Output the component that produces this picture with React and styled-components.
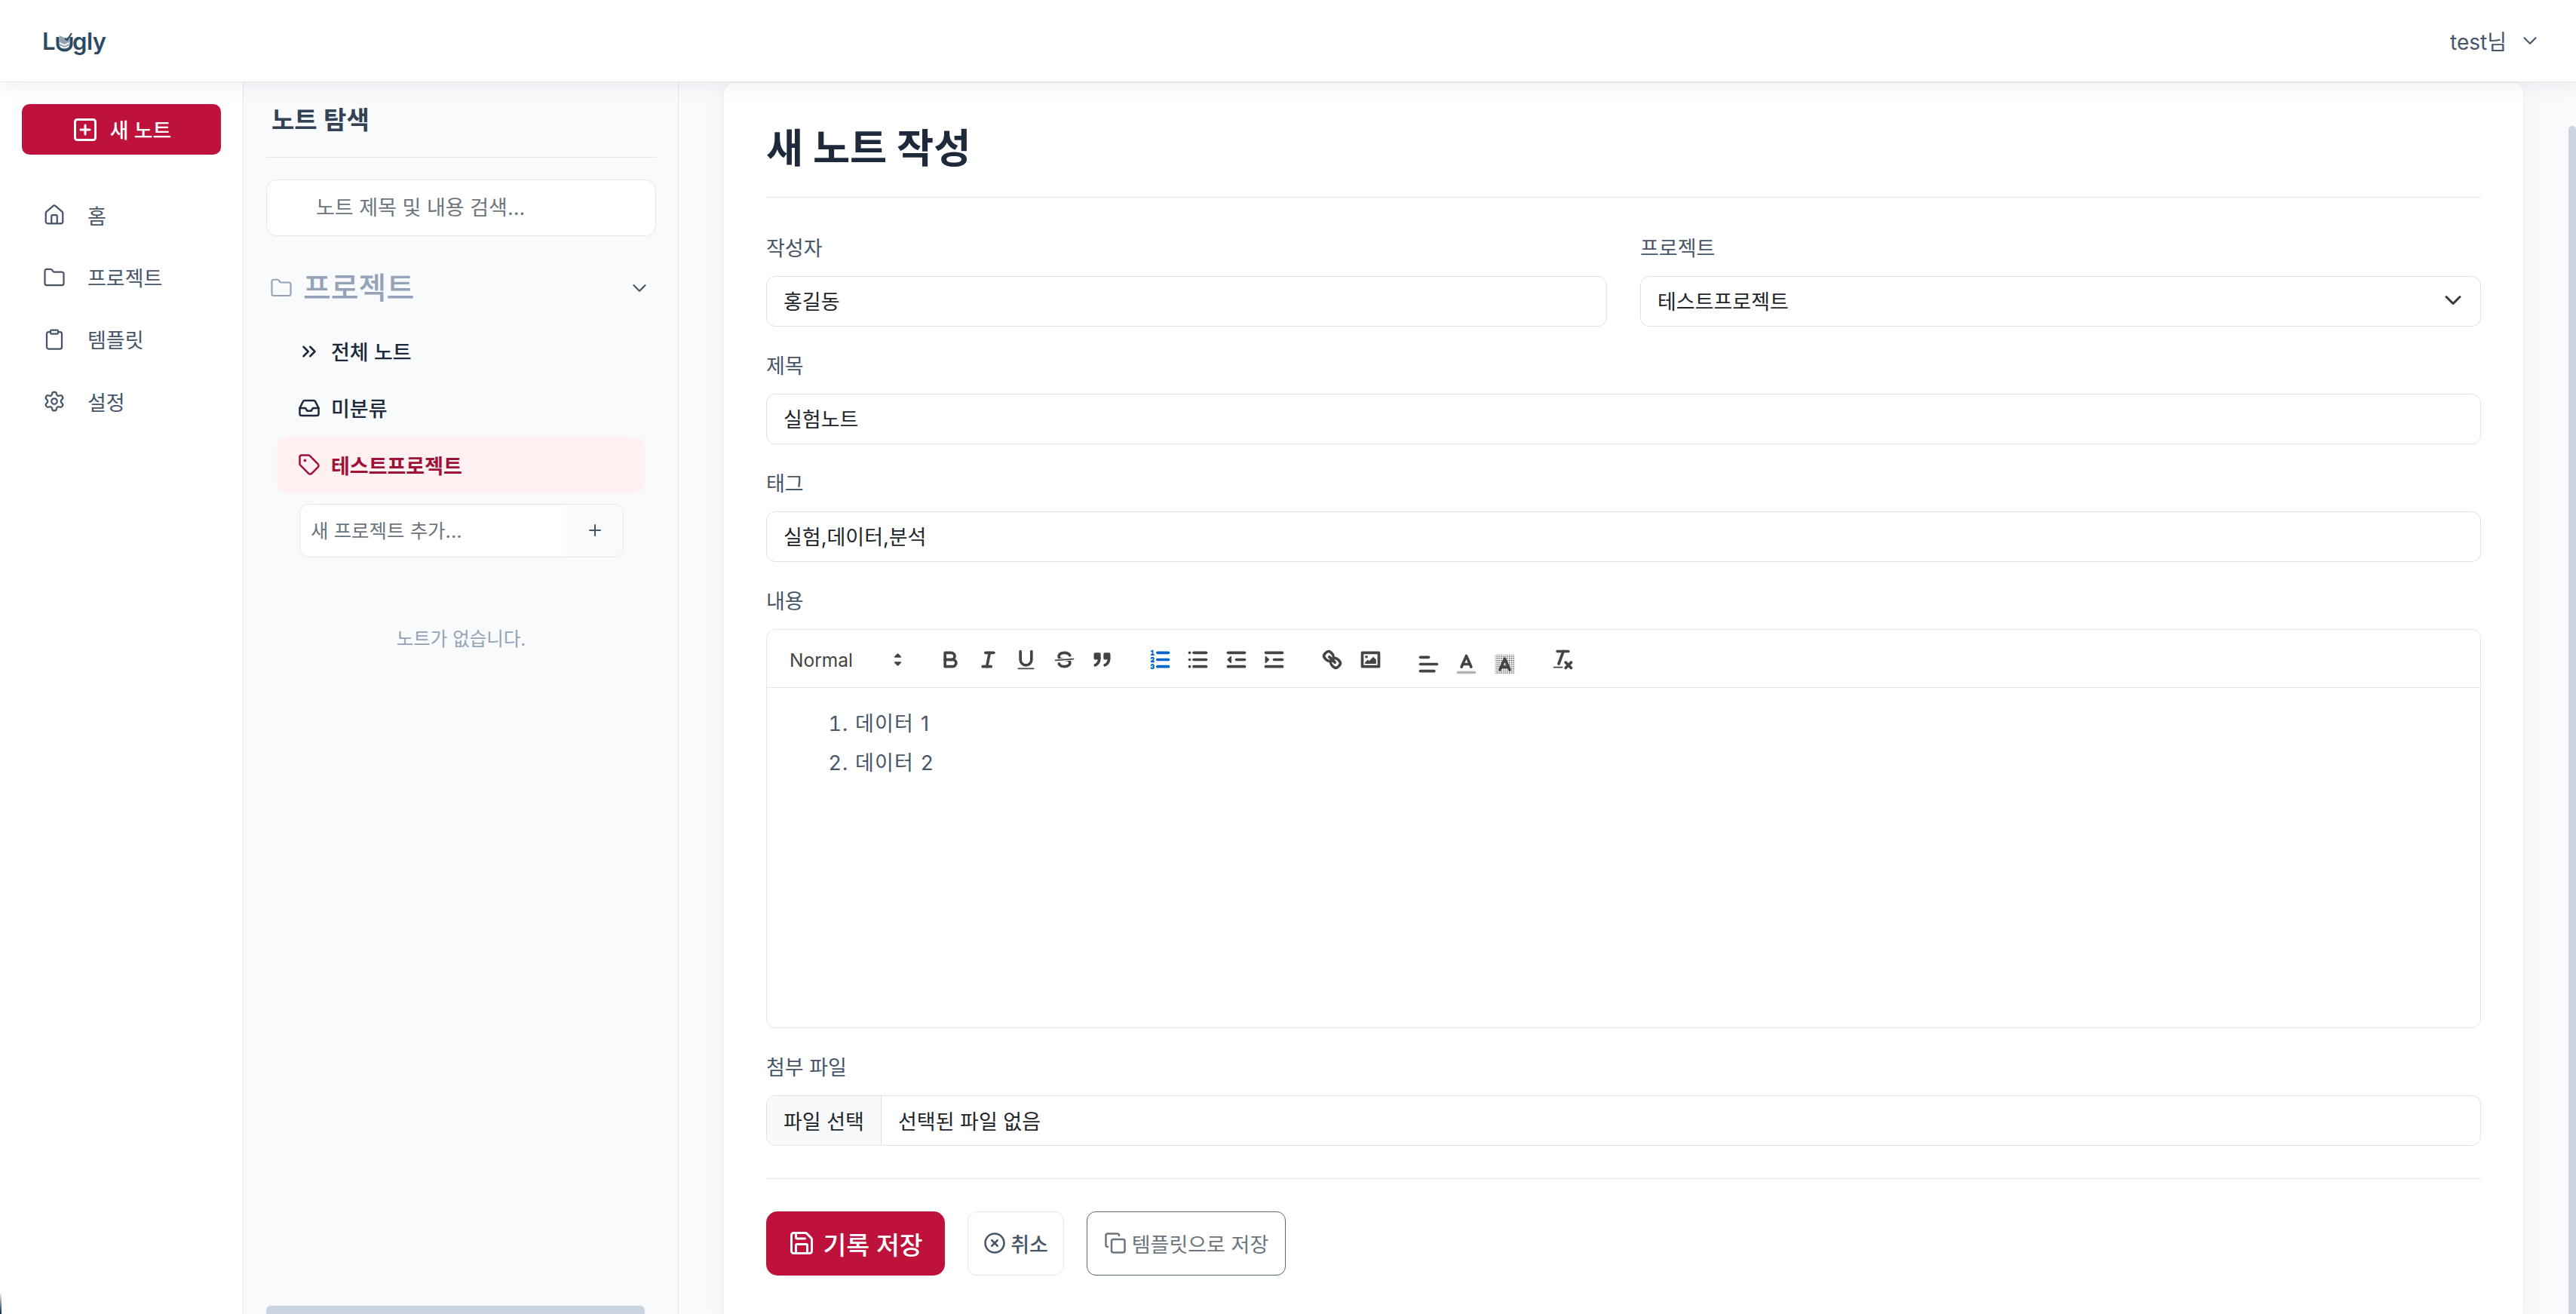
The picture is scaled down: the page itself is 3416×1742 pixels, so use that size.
import React from 'react'
import styled, { createGlobalStyle } from 'styled-components'
import {
  House, Folder, Clipboard, Settings, ChevronDown, ChevronsRight, Inbox, Tag, Plus, SquarePlus, Save, CircleX, Copy
} from 'lucide-react'

const FONT = `Inter, "Noto Sans CJK KR", "Noto Sans", sans-serif`
const BRAND = '#be123c'
const LINE = '#e2e8f0'

const GlobalStyle = createGlobalStyle`
  html, body, #root { margin: 0; height: 100%; }
  body {
    font-family: ${FONT};
    font-size: 27px;
    background: #f8fafc;
    overflow: hidden;
  }
  * { box-sizing: border-box; }
`

const Page = styled.div`
  position: relative;
  display: flex;
  flex-direction: column;
  height: 100vh;
  overflow: hidden;
`

const Header = styled.header`
  position: relative;
  z-index: 5;
  flex: 0 0 109px;
  display: flex;
  align-items: center;
  justify-content: space-between;
  padding: 0 46px 0 56px;
  background: #fff;
  border-bottom: 1px solid ${LINE};
  box-shadow: 0 4px 24px rgba(15, 23, 42, 0.07);
`

const Logo = styled.div`
  display: flex;
  align-items: center;
  font-size: 31px;
  font-weight: 600;
  color: #2c4a63;
  letter-spacing: -0.5px;
  svg { margin: 2px -1px 0 1px; }
`

const User = styled.div`
  display: flex;
  align-items: center;
  gap: 16px;
  color: #475569;
  font-size: 28px;
`

const Body = styled.div`
  flex: 1;
  display: flex;
  min-height: 0;
`

const Sidebar = styled.aside`
  flex: 0 0 323px;
  padding: 29px 29px 0;
  background: #fff;
  border-right: 1px solid ${LINE};
`

const NewNote = styled.button`
  display: flex;
  align-items: center;
  justify-content: center;
  gap: 15px;
  width: 100%;
  height: 67px;
  border: 0;
  border-radius: 10px;
  background: ${BRAND};
  color: #fff;
  font-family: ${FONT};
  font-size: 27px;
  font-weight: 500;
`

const Nav = styled.nav`
  margin-top: 39px;
`

const NavItem = styled.a`
  display: flex;
  align-items: center;
  gap: 29px;
  height: 82.4px;
  padding-left: 28px;
  color: #475569;
`

const Explorer = styled.section`
  position: relative;
  flex: 0 0 577px;
  min-width: 0;
  padding: 0 29px 0 30px;
  background: #f8fafc;
  border-right: 1px solid ${LINE};
`

const ExplorerTitle = styled.h2`
  margin: 0;
  height: 100px;
  padding: 29px 0 0 7px;
  border-bottom: 1px solid ${LINE};
  color: #334155;
  font-size: 33px;
  line-height: 42px;
  font-weight: 600;
`

const Search = styled.input`
  display: block;
  width: 100%;
  height: 75px;
  margin-top: 29px;
  padding: 0 20px 0 65px;
  border: 1px solid ${LINE};
  border-radius: 14px;
  background: #fff;
  font-family: ${FONT};
  font-size: 27px;
  &::placeholder { color: #6c757d; opacity: 1; }
`

const SectionHead = styled.div`
  display: flex;
  align-items: center;
  height: 48px;
  margin-top: 45px;
  padding: 0 7px 0 4.5px;
  color: #94a3b8;
  font-size: 40px;
  line-height: 46px;
  font-weight: 500;
  span { margin-left: 14.5px; flex: 1; }
  svg:last-child { color: #475569; }
`

const ProjectList = styled.ul`
  list-style: none;
  margin: 22px 15px 0 14px;
  padding: 0;
`

const ProjectItem = styled.li`
  display: flex;
  align-items: center;
  gap: 14px;
  height: 75.3px;
  padding-left: 28px;
  border-radius: 14px;
  background: ${({ $active }) => ($active ? '#fff1f2' : 'transparent')};
  color: ${({ $active }) => ($active ? '#9f1239' : '#1e293b')};
  font-weight: ${({ $active }) => ($active ? 700 : 500)};
`

const AddProject = styled.div`
  display: flex;
  height: 71px;
  margin: 14px 43px 0 44px;
  border: 1px solid ${LINE};
  border-radius: 12px;
  overflow: hidden;
  background: #fff;
`

const AddInput = styled.input`
  flex: 1;
  min-width: 0;
  padding: 0 14px;
  border: 0;
  background: transparent;
  font-family: ${FONT};
  font-size: 25.5px;
  &::placeholder { color: #6c757d; opacity: 1; }
`

const AddButton = styled.button`
  flex: 0 0 75px;
  display: flex;
  align-items: center;
  justify-content: center;
  border: 0;
  background: #f8fafc;
  color: #475569;
`

const Empty = styled.p`
  margin: 90px 0 0;
  color: #94a3b8;
  font-size: 24.5px;
  line-height: 36px;
  text-align: center;
`

const ScrollThumb = styled.div`
  position: absolute;
  bottom: 0;
  background: #cbd5e1;
  border-radius: 6px 6px 0 0;
`

const HorizontalThumb = styled(ScrollThumb)`
  left: 30px;
  width: 502px;
  height: 11px;
`

const VerticalThumb = styled(ScrollThumb)`
  top: 58px;
  right: 0;
  width: 10px;
`

const Main = styled.main`
  position: relative;
  flex: 1;
  min-width: 0;
  padding-left: 59px;
  background: #f8fafc;
  overflow: hidden;
`

const Card = styled.div`
  width: 2388px;
  min-height: 100%;
  padding: 0 56px;
  background: #fff;
  border: 1px solid #eef1f5;
  border-bottom: 0;
  border-radius: 14px 14px 0 0;
  box-shadow: 0 4px 30px rgba(15, 23, 42, 0.05);
`

const Title = styled.h1`
  margin: 0;
  padding: 51px 0 28px;
  border-bottom: 1px solid ${LINE};
  color: #1e293b;
  font-size: 53.5px;
  line-height: 72px;
  font-weight: 700;
`

const Form = styled.div`
  display: flex;
  flex-direction: column;
  gap: 33.5px;
  margin-top: 48px;
`

const FieldRow = styled.div`
  display: grid;
  grid-template-columns: 1fr 1fr;
  gap: 44px;
`

const Field = styled.div`
  display: flex;
  flex-direction: column;
`

const Label = styled.label`
  margin-bottom: 15.5px;
  color: #475569;
  line-height: 40px;
`

const Input = styled.input`
  height: 67px;
  padding: 0 22px 2px;
  border: 1px solid #dee2e6;
  border-radius: 12px;
  background: #fff;
  color: #212529;
  font-family: ${FONT};
  font-size: 27px;
`

const Select = styled.div`
  display: flex;
  align-items: center;
  justify-content: space-between;
  height: 67px;
  padding: 0 24px 2px 22px;
  border: 1px solid #dee2e6;
  border-radius: 12px;
  color: #212529;
`

const Editor = styled.div`
  height: 529px;
  border: 1px solid ${LINE};
  border-radius: 12px;
`

const Toolbar = styled.div`
  display: flex;
  align-items: center;
  height: 77px;
  padding: 4px 0 0 30px;
  border-bottom: 1px solid ${LINE};
`

const HeadingPicker = styled.div`
  display: flex;
  align-items: center;
  justify-content: space-between;
  width: 161px;
  margin-right: 27px;
  color: #444;
  font-size: 24.5px;
  font-weight: 400;
  svg { margin-right: 1px; }
`

const ToolGroup = styled.div`
  display: flex;
  margin-right: 27px;
`

const ToolButton = styled.span`
  display: flex;
  align-items: center;
  justify-content: center;
  width: 50.3px;
  height: 36px;
  margin-top: ${({ $drop }) => ($drop ? '12px' : '0')};
`

const EditorText = styled.ol`
  margin: 0;
  padding: 22px 0 0 117px;
  color: #475569;
  line-height: 52px;
  letter-spacing: 1.2px;
`

const FileInput = styled.div`
  display: flex;
  align-items: center;
  height: 67px;
  border: 1px solid #dee2e6;
  border-radius: 12px;
  overflow: hidden;
  color: #212529;
`

const FileButton = styled.span`
  display: flex;
  align-items: center;
  height: 100%;
  padding: 0 22px;
  background: #f8f9fa;
  border-right: 1px solid #dee2e6;
`

const FileName = styled.span`
  padding-left: 22px;
`

const Actions = styled.div`
  display: flex;
  gap: 30px;
  margin-top: 43px;
  padding-top: 43px;
  border-top: 1px solid ${LINE};
`

const ActionButton = styled.button`
  display: flex;
  align-items: center;
  justify-content: center;
  height: 85px;
  border-radius: ${({ $primary }) => ($primary ? '15px' : '12px')};
  font-family: ${FONT};
  font-size: ${({ $primary }) => ($primary ? '33.5px' : '27px')};
  font-weight: ${({ $weight }) => $weight || 400};
  width: ${({ $width }) => $width}px;
  gap: ${({ $gap }) => $gap}px;
  background: ${({ $primary }) => ($primary ? BRAND : '#fff')};
  color: ${({ $primary, $color }) => ($primary ? '#fff' : $color)};
  border: ${({ $primary, $border }) => ($primary ? '0' : `1px solid ${$border}`)};
`

const Sliver = styled.div`
  position: absolute;
  left: 0;
  bottom: 0;
  width: 2px;
  height: 29px;
  background: linear-gradient(to bottom, rgba(15, 42, 74, 0), #0f2a4a);
  z-index: 6;
`

const LogoMark = () => (
  <svg width='23' height='27' viewBox='0 0 23 27' fill='none'>
    <path d='M2.5 7v9c0 5.5 4 8.5 9 8.5s9-3 9-8.5V7' stroke='#2c4a63' strokeWidth='4' />
    <path d='M5 5l6.5 3v9L5 14zM18 7v7l-6.5 3V8' fill='#93a5b4' />
    <path d='M5 17l6.5 3 6.5-3' stroke='#93a5b4' strokeWidth='2' />
    <path d='M12 9l3 2 6-9' stroke='#2c4a63' strokeWidth='2' />
  </svg>
)

const SelectArrow = () => (
  <svg width='24' height='24' viewBox='0 0 16 16' fill='none'>
    <path d='m2 5 6 6 6-6' stroke='#343a40' strokeWidth='2' strokeLinecap='round' strokeLinejoin='round' />
  </svg>
)

// Quill snow toolbar icons
const QlIcon = ({ children, color = '#444' }) => (
  <svg
    width='33'
    height='33'
    viewBox='0 0 18 18'
    fill='none'
    stroke={color}
    strokeWidth='2'
    strokeLinecap='round'
    strokeLinejoin='round'
  >
    {children}
  </svg>
)

const Filled = ({ d, color = '#444' }) => <path d={d} fill={color} stroke='none' />

const ListLines = ({ x1 }) => (
  <>
    <line x1={x1} x2='15' y1='4' y2='4' />
    <line x1={x1} x2='15' y1='9' y2='9' />
    <line x1={x1} x2='15' y1='14' y2='14' />
  </>
)

const tools = [
  [
    { key: 'bold', icon: <><path d='M5,4H9.5A2.5,2.5,0,0,1,12,6.5v0A2.5,2.5,0,0,1,9.5,9H5A0,0,0,0,1,5,9V4A0,0,0,0,1,5,4Z' /><path d='M5,9h5.5A2.5,2.5,0,0,1,13,11.5v0A2.5,2.5,0,0,1,10.5,14H5a0,0,0,0,1,0,0V9A0,0,0,0,1,5,9Z' /></> },
    { key: 'italic', icon: <><line x1='7' x2='13' y1='4' y2='4' /><line x1='5' x2='11' y1='14' y2='14' /><line x1='8' x2='10' y1='14' y2='4' /></> },
    { key: 'underline', icon: <><path d='M5,3V9a4.012,4.012,0,0,0,4,4H9a4.012,4.012,0,0,0,4-4V3' /><rect x='3' y='15' width='12' height='1' rx='.5' fill='#444' stroke='none' /></> },
    { key: 'strike', icon: <><line x1='15.5' x2='2.5' y1='8.5' y2='9.5' strokeWidth='1' /><Filled d='M9.007,8C6.542,7.791,6,7.519,6,6.5,6,5.792,7.283,5,9,5c1.571,0,2.765.679,2.969,1.309a1,1,0,0,0,1.9-.617C13.356,4.106,11.354,3,9,3,6.2,3,4,4.538,4,6.5a3.2,3.2,0,0,0,.5,1.843Z' /><Filled d='M8.984,10C11.457,10.208,12,10.479,12,11.5c0,.708-1.283,1.5-3,1.5-1.571,0-2.765-.679-2.969-1.309a1,1,0,1,0-1.9.617C4.644,13.894,6.646,15,9,15c2.8,0,5-1.538,5-3.5a3.2,3.2,0,0,0-.5-1.843Z' /></> },
    { key: 'quote', icon: <><rect x='4' y='5' width='3' height='3' fill='#444' /><rect x='11' y='5' width='3' height='3' fill='#444' /><path d='M7,8c0,4.031-3,5-3,5' fill='#444' /><path d='M14,8c0,4.031-3,5-3,5' fill='#444' /></> }
  ],
  [
    { key: 'ordered', color: '#06c', icon: <><ListLines x1='7' /><line x1='2.5' x2='4.5' y1='5.5' y2='5.5' strokeWidth='1' /><Filled color='#06c' d='M3.5,6A0.5,0.5,0,0,1,3,5.5V3.085l-0.276.138A0.5,0.5,0,0,1,2.053,3c-0.124-.247-0.023-0.324.224-0.447l1-.5A0.5,0.5,0,0,1,4,2.5v3A0.5,0.5,0,0,1,3.5,6Z' /><path strokeWidth='1' d='M4.5,10.5h-2c0-.234,1.85-1.076,1.85-2.234A0.959,0.959,0,0,0,2.5,8.156' /><path strokeWidth='1' d='M2.5,14.846a0.959,0.959,0,0,0,1.85-.109A0.7,0.7,0,0,0,3.75,14a0.688,0.688,0,0,0,.6-0.736,0.959,0.959,0,0,0-1.85-.109' /></> },
    { key: 'bullet', icon: <><ListLines x1='6' /><line x1='3' x2='3' y1='4' y2='4' /><line x1='3' x2='3' y1='9' y2='9' /><line x1='3' x2='3' y1='14' y2='14' /></> },
    { key: 'outdent', icon: <><line x1='3' x2='15' y1='14' y2='14' /><line x1='3' x2='15' y1='4' y2='4' /><line x1='9' x2='15' y1='9' y2='9' /><polygon points='5 7 5 11 3 9 5 7' fill='#444' strokeWidth='1' /></> },
    { key: 'indent', icon: <><line x1='3' x2='15' y1='14' y2='14' /><line x1='3' x2='15' y1='4' y2='4' /><line x1='9' x2='15' y1='9' y2='9' /><polygon points='3 7 3 11 5 9 3 7' fill='#444' strokeWidth='1' /></> }
  ],
  [
    { key: 'link', icon: <><line x1='7' x2='11' y1='7' y2='11' /><path d='M8.9,4.577a3.476,3.476,0,0,1,.36,4.679A3.476,3.476,0,0,1,4.577,8.9C3.185,7.5,2.035,6.4,4.217,4.217S7.5,3.185,8.9,4.577Z' /><path d='M13.423,9.1a3.476,3.476,0,0,0-4.679-.36,3.476,3.476,0,0,0,.36,4.679c1.392,1.392,2.5,2.542,4.679.36S14.815,10.5,13.423,9.1Z' /></> },
    { key: 'image', icon: <><rect x='3' y='4' width='12' height='10' /><circle cx='6' cy='7' r='1' fill='#444' stroke='none' /><polygon points='5 12 5 11 7 9 8 10 11 7 13 9 13 12 5 12' fill='#444' stroke='none' /></> }
  ],
  [
    { key: 'align', drop: true, icon: <><line x1='3' x2='15' y1='9' y2='9' /><line x1='3' x2='13' y1='14' y2='14' /><line x1='3' x2='9' y1='4' y2='4' /></> },
    { key: 'color', drop: true, icon: <><line x1='3' x2='15' y1='15' y2='15' stroke='#b4b4b4' /><polyline points='5.5 11 9 3 12.5 11' /><line x1='11.63' x2='6.38' y1='9' y2='9' /></> },
    { key: 'background', drop: true, icon: <><defs><pattern id='ql-dots' width='1.5' height='1.5' patternUnits='userSpaceOnUse'><rect width='0.8' height='0.8' fill='#444' stroke='none' /></pattern></defs><rect x='2' y='2' width='14' height='14' fill='url(#ql-dots)' stroke='none' /><polyline points='5.5 13 9 5 12.5 13' /><line x1='11.63' x2='6.38' y1='11' y2='11' /></> }
  ],
  [
    { key: 'clean', icon: <><line x1='5' x2='13' y1='3' y2='3' /><line x1='6' x2='9.35' y1='12' y2='3' /><line x1='11' x2='15' y1='11' y2='15' /><line x1='15' x2='11' y1='11' y2='15' /><rect x='2' y='14' width='7' height='1' rx='.5' fill='#444' stroke='none' /></> }
  ]
]

const navItems = [
  { label: '홈', Icon: House },
  { label: '프로젝트', Icon: Folder },
  { label: '템플릿', Icon: Clipboard },
  { label: '설정', Icon: Settings }
]

const projects = [
  { label: '전체 노트', Icon: ChevronsRight },
  { label: '미분류', Icon: Inbox },
  { label: '테스트프로젝트', Icon: Tag, active: true }
]

const App = () => (
  <Page>
    <GlobalStyle />
    <Header>
      <Logo>L<LogoMark />gly</Logo>
      <User>
        <span>test님</span>
        <ChevronDown size={30} strokeWidth={1.7} />
      </User>
    </Header>
    <Body>
      <Sidebar>
        <NewNote><SquarePlus size={36} strokeWidth={2} />새 노트</NewNote>
        <Nav>
          {navItems.map(({ label, Icon }) => (
            <NavItem key={label}><Icon size={30} strokeWidth={1.8} />{label}</NavItem>
          ))}
        </Nav>
      </Sidebar>
      <Explorer>
        <ExplorerTitle>노트 탐색</ExplorerTitle>
        <Search placeholder='노트 제목 및 내용 검색...' />
        <SectionHead>
          <Folder size={30} strokeWidth={1.7} />
          <span>프로젝트</span>
          <ChevronDown size={30} strokeWidth={1.7} />
        </SectionHead>
        <ProjectList>
          {projects.map(({ label, Icon, active }) => (
            <ProjectItem key={label} $active={active}><Icon size={30} strokeWidth={2} />{label}</ProjectItem>
          ))}
        </ProjectList>
        <AddProject>
          <AddInput placeholder='새 프로젝트 추가...' />
          <AddButton><Plus size={24} strokeWidth={2} /></AddButton>
        </AddProject>
        <Empty>노트가 없습니다.</Empty>
        <HorizontalThumb />
      </Explorer>
      <Main>
        <Card>
          <Title>새 노트 작성</Title>
          <Form>
            <FieldRow>
              <Field>
                <Label>작성자</Label>
                <Input readOnly value='홍길동' />
              </Field>
              <Field>
                <Label>프로젝트</Label>
                <Select>테스트프로젝트<SelectArrow /></Select>
              </Field>
            </FieldRow>
            <Field>
              <Label>제목</Label>
              <Input readOnly value='실험노트' />
            </Field>
            <Field>
              <Label>태그</Label>
              <Input readOnly value='실험,데이터,분석' />
            </Field>
            <Field>
              <Label>내용</Label>
              <Editor>
                <Toolbar>
                  <HeadingPicker>
                    Normal
                    <svg width='33' height='33' viewBox='0 0 18 18' fill='#444' stroke='#444' strokeWidth='1' strokeLinejoin='round'>
                      <polygon points='7 11 9 13 11 11 7 11' />
                      <polygon points='7 7 9 5 11 7 7 7' />
                    </svg>
                  </HeadingPicker>
                  {tools.map((group, i) => (
                    <ToolGroup key={i}>
                      {group.map(tool => (
                        <ToolButton key={tool.key} $drop={tool.drop}>
                          <QlIcon color={tool.color}>{tool.icon}</QlIcon>
                        </ToolButton>
                      ))}
                    </ToolGroup>
                  ))}
                </Toolbar>
                <EditorText>
                  <li>데이터 1</li>
                  <li>데이터 2</li>
                </EditorText>
              </Editor>
            </Field>
            <Field>
              <Label>첨부 파일</Label>
              <FileInput>
                <FileButton>파일 선택</FileButton>
                <FileName>선택된 파일 없음</FileName>
              </FileInput>
            </Field>
          </Form>
          <Actions>
            <ActionButton $primary $width={237} $gap={10} $weight={500}>
              <Save size={36} strokeWidth={2} />기록 저장
            </ActionButton>
            <ActionButton $width={128} $gap={6} $weight={500} $color='#475569' $border={LINE}>
              <CircleX size={30} strokeWidth={2} />취소
            </ActionButton>
            <ActionButton $width={264} $gap={7} $color='#6c757d' $border='#56677a'>
              <Copy size={30} strokeWidth={2} />템플릿으로 저장
            </ActionButton>
          </Actions>
        </Card>
        <VerticalThumb />
      </Main>
    </Body>
    <Sliver />
  </Page>
)

export default App
